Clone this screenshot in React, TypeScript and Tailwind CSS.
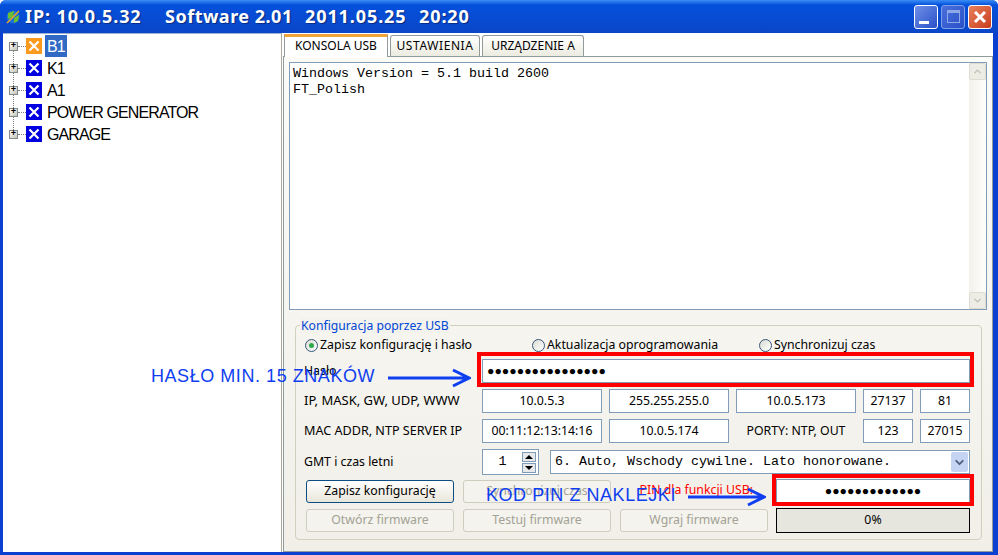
import {ChevronDown, ChevronUp} from "lucide-react";

const ui = "font-['Noto_Sans',sans-serif]";

const tree = ["B1", "K1", "A1", "POWER GENERATOR", "GARAGE"];

function TreeRow({label, index}: { label: string; index: number }) {
    const first = index === 0;
    return (
        <div className="flex items-center h-[22px] pl-[6px]">
            <div className="w-[9px] h-[9px] border border-[#7f8c8c] bg-gradient-to-br from-white to-[#c8c4b4] flex items-center justify-center relative z-10">
                <span className="text-black text-[9px] leading-[7px] font-['Liberation_Mono',monospace] font-bold">+</span>
            </div>
            <div className="w-[8px] border-t border-dotted border-[#808080]"/>
            <div className={`w-[16px] h-[16px] flex items-center justify-center ${first ? "bg-[#fb9a1c]" : "bg-[#0000e0]"}`}>
                <svg width="12" height="12" viewBox="0 0 12 12">
                    <path d="M1.5 1.5 L10.5 10.5 M10.5 1.5 L1.5 10.5" stroke="white" strokeWidth="2.2"/>
                </svg>
            </div>
            <span className={`ml-[3px] px-[2px] h-[22px] leading-[23px] text-[16px] tracking-[-0.9px] font-['Liberation_Sans',sans-serif] ${first ? "bg-[#316ac5] text-white" : "text-black"}`}>
                {label}
            </span>
        </div>
    );
}

function Tab({label, active, width}: { label: string; active?: boolean; width: string }) {
    return (
        <div className={`${width} ${active ? "h-[23px] bg-white border-t-[3px] border-t-[#f0a43a] -mb-[1px] z-10 pb-[3px]" : "h-[21px] bg-gradient-to-b from-white to-[#ecebe0] border-t border-t-[#919b9c] rounded-t-[3px]"} border-x border-[#919b9c] flex items-center justify-center text-[12px] text-black ${ui}`}>
            {label}
        </div>
    );
}

function Field({children, width}: { children: React.ReactNode; width: string }) {
    return (
        <div className={`${width} h-[24px] bg-white border border-[#7f9db9] flex items-center justify-center text-[12.3px] text-black ${ui}`}>
            {children}
        </div>
    );
}

function Btn({label, primary}: { label: string; primary?: boolean }) {
    return (
        <div className={`w-[148px] h-[23px] rounded-[3px] flex items-center justify-center text-[12.3px] ${ui} ${primary ? "border border-[#0d4d86] bg-gradient-to-b from-white to-[#e8e6da] text-black" : "border border-[#cfcdbf] bg-[#f4f3ee] text-[#a3a294]"}`}>
            {label}
        </div>
    );
}

function Radio({label, checked, className}: { label: string; checked?: boolean; className: string }) {
    return (
        <div className={`${className} flex items-center gap-[2px] text-[12.3px] text-black whitespace-nowrap ${ui}`}>
            <div className="w-[13px] h-[13px] rounded-full border border-[#35567a] bg-gradient-to-br from-[#dcdcd4] to-white flex items-center justify-center">
                {checked && <div className="w-[5px] h-[5px] rounded-full bg-[#2fa84a]"/>}
            </div>
            {label}
        </div>
    );
}

function Arrow({width}: { width: number }) {
    return (
        <svg width={width} height="20" viewBox={`0 0 ${width} 20`}>
            <path d={`M1 10 H${width - 2} M${width - 18} 2 L${width - 2} 10 L${width - 18} 18`} stroke="#0f3ff0" strokeWidth="3" fill="none"/>
        </svg>
    );
}

export default function App() {
    return (
        <div className="relative w-[998px] h-[555px] overflow-hidden flex flex-col bg-[#0a3fd0] rounded-t-[6px]">
            {/* title bar */}
            <div className="h-[33px] shrink-0 flex items-center pl-[6px] pr-[6px] bg-gradient-to-b from-[#3a8cf5] via-[#0450dc] via-[15%] to-[#0a46c8]">
                <svg width="14" height="16" viewBox="0 0 14 16" className="shrink-0">
                    <circle cx="7" cy="8" r="6.5" fill="#1f6fd8"/>
                    <path d="M2 4 L8 2 L7 8 L2 10 Z M8 9 L13 6 L12 12 L8 14 Z" fill="#68c030"/>
                    <path d="M1 14 L13 2" stroke="#f0a820" strokeWidth="1.5"/>
                </svg>
                <div className="ml-[5px] flex text-white text-[18px] font-bold tracking-[0.9px] whitespace-nowrap font-['Noto_Sans',sans-serif] [text-shadow:1px_1px_1px_#0a2a80]">
                    <span className="w-[140px]">IP: 10.0.5.32</span>
                    <span className="w-[140px] tracking-[0.5px]">Software 2.01</span>
                    <span className="w-[114px]">2011.05.25</span>
                    <span>20:20</span>
                </div>
                <div className="ml-auto flex gap-[3px]">
                    <div className="w-[24px] h-[24px] rounded-[3px] border border-white bg-gradient-to-br from-[#6f8fe8] to-[#2a50c8] flex items-end pl-[4px] pb-[4px]">
                        <div className="w-[10px] h-[3px] bg-white"/>
                    </div>
                    <div className="w-[24px] h-[24px] rounded-[3px] border border-[#7f9ee8] bg-gradient-to-br from-[#4a70dc] to-[#2a50c8] flex items-center justify-center">
                        <div className="w-[13px] h-[13px] border border-[#8fa8e8] border-t-[3px]"/>
                    </div>
                    <div className="w-[24px] h-[24px] rounded-[3px] border border-white bg-gradient-to-br from-[#e8805c] to-[#c83a18] flex items-center justify-center">
                        <svg width="14" height="14" viewBox="0 0 14 14">
                            <path d="M2 2 L12 12 M12 2 L2 12" stroke="white" strokeWidth="3"/>
                        </svg>
                    </div>
                </div>
            </div>

            {/* body */}
            <div className="flex-1 flex min-h-0 ml-[3px] mr-[5px] mb-[3px] bg-white">
                <div className="w-[279px] shrink-0 pt-[1px] border-t border-[#9db0d0] border-r border-r-[#aca899] relative">
                    <div className="absolute left-[10px] top-[14px] h-[88px] border-l border-dotted border-[#808080]"/>
                    {tree.map((t, i) => <TreeRow key={t} label={t} index={i}/>)}
                </div>

                <div className="flex-1 flex flex-col min-w-0 pl-[1px]">
                    {/* tabs */}
                    <div className="h-[22px] mt-[1px] flex items-end pl-[1px] gap-[2px] relative shrink-0">
                        <Tab label="KONSOLA USB" active width="w-[104px]"/>
                        <Tab label="USTAWIENIA" width="w-[90px] tracking-[0.6px]"/>
                        <Tab label="URZĄDZENIE A" width="w-[102px]"/>
                    </div>

                    <div className="flex-1 min-h-0 border border-[#919b9c] bg-gradient-to-b from-[#fbfbf8] to-[#f1efe8] flex flex-col pt-[5px] pl-[5px] pr-[5px]">
                        {/* console */}
                        <div className="h-[248px] shrink-0 bg-white border border-[#7f9db9] flex">
                            <div className="flex-1 pl-[3px] pt-[3px] text-[13.33px] leading-[16px] text-black font-['Liberation_Mono',monospace] whitespace-pre">
                                {"Windows Version = 5.1 build 2600\nFT_Polish"}
                            </div>
                            <div className="w-[17px] bg-gradient-to-r from-[#f3f1ec] to-[#fefefb] flex flex-col justify-between">
                                <div className="h-[17px] bg-[#eeede5] border border-[#dedcd0] rounded-[2px] flex items-center justify-center">
                                    <ChevronUp size={11} strokeWidth={3} className="text-[#c0bfb2]"/>
                                </div>
                                <div className="h-[17px] bg-[#eeede5] border border-[#dedcd0] rounded-[2px] flex items-center justify-center">
                                    <ChevronDown size={11} strokeWidth={3} className="text-[#c0bfb2]"/>
                                </div>
                            </div>
                        </div>

                        {/* config group */}
                        <div className="relative mt-[15px] ml-[6px] h-[215px] w-[687px] rounded-[4px] border border-[#d0d0bf] pl-[8px] pt-[10px]">
                            <span className={`absolute left-[4px] -top-[8px] bg-[#f3f2ec] px-[1px] text-[12.2px] leading-[15px] text-[#0046d5] ${ui}`}>
                                Konfiguracja poprzez USB
                            </span>
                            <div className="h-[18px] flex items-center ml-[1px]">
                                <Radio label="Zapisz konfigurację i hasło" checked className="w-[227px]"/>
                                <Radio label="Aktualizacja oprogramowania" className="w-[227px]"/>
                                <Radio label="Synchronizuj czas" className="w-[120px]"/>
                            </div>

                            <div className="mt-[5px] flex flex-col gap-[6px]">
                                <div className={`flex items-center h-[24px] text-[12.3px] text-black ${ui}`}>
                                    <span className="w-[178px]">Hasło</span>
                                    <Field width="w-[488px] !justify-start pl-[4px] font-bold">●●●●●●●●●●●●●●●●</Field>
                                </div>
                                <div className={`flex items-center h-[24px] gap-[7px] text-[12.3px] text-black ${ui}`}>
                                    <span className="w-[171px] text-[13px] whitespace-nowrap">IP, MASK, GW, UDP, WWW</span>
                                    <Field width="w-[120px]">10.0.5.3</Field>
                                    <Field width="w-[120px]">255.255.255.0</Field>
                                    <Field width="w-[120px]">10.0.5.173</Field>
                                    <Field width="w-[50px]">27137</Field>
                                    <Field width="w-[50px]">81</Field>
                                </div>
                                <div className={`flex items-center h-[24px] gap-[7px] text-[12.3px] text-black ${ui}`}>
                                    <span className="w-[171px] text-[12.6px] whitespace-nowrap">MAC ADDR, NTP SERVER IP</span>
                                    <Field width="w-[120px]">00:11:12:13:14:16</Field>
                                    <Field width="w-[120px]">10.0.5.174</Field>
                                    <span className="w-[120px] text-center">PORTY: NTP, OUT</span>
                                    <Field width="w-[50px]">123</Field>
                                    <Field width="w-[50px]">27015</Field>
                                </div>
                            </div>

                            <div className={`mt-[6px] flex items-center h-[26px] text-[12.3px] text-black ${ui}`}>
                                <span className="w-[178px]">GMT i czas letni</span>
                                <div className="w-[57px] h-[26px] bg-white border border-[#7f9db9] flex items-center">
                                    <span className="flex-1 text-center font-['Liberation_Mono',monospace] text-[13.33px]">1</span>
                                    <div className="w-[14px] mr-[2px] flex flex-col gap-[1px]">
                                        <div className="h-[10px] border border-[#7f9db9] bg-[#e6e8ea] flex items-center justify-center">
                                            <div className="w-0 h-0 border-x-[4px] border-x-transparent border-b-[4px] border-b-black"/>
                                        </div>
                                        <div className="h-[10px] border border-[#7f9db9] bg-[#e6e8ea] flex items-center justify-center">
                                            <div className="w-0 h-0 border-x-[4px] border-x-transparent border-t-[4px] border-t-black"/>
                                        </div>
                                    </div>
                                </div>
                                <div className="ml-[11px] w-[420px] h-[24px] bg-white border border-[#7f9db9] flex items-center justify-between pl-[4px] pr-[1px] font-['Liberation_Mono',monospace] text-[13.33px] whitespace-pre">
                                    6. Auto, Wschody cywilne. Lato honorowane.
                                    <div className="w-[17px] h-[20px] bg-[#c6d4f4] rounded-[2px] flex items-center justify-center">
                                        <ChevronDown size={13} strokeWidth={3.5} className="text-[#4d6185]"/>
                                    </div>
                                </div>
                            </div>

                            <div className="mt-[5px] flex items-center gap-[9px] h-[23px] ml-[2px]">
                                <Btn label="Zapisz konfigurację" primary/>
                                <Btn label="Synchronizuj czas"/>
                                <span className={`w-[148px] text-right pr-[15px] -mt-[3px] text-[12.3px] text-[#ff0000] whitespace-nowrap ${ui}`}>PIN dla funkcji USB:</span>
                                <Field width="w-[194px] -ml-[1px] -mt-[1px] font-bold">●●●●●●●●●●●●●</Field>
                            </div>
                            <div className="mt-[6px] flex items-center gap-[9px] h-[23px] ml-[2px]">
                                <Btn label="Otwórz firmware"/>
                                <Btn label="Testuj firmware"/>
                                <Btn label="Wgraj firmware"/>
                                <div className={`-ml-[1px] w-[194px] h-[25px] border border-black bg-[#e6e6df] flex items-center justify-center text-[12.3px] text-black ${ui}`}>
                                    0%
                                </div>
                            </div>
                        </div>
                    </div>
                </div>
            </div>

            {/* annotations over the screenshot */}
            <div className="absolute left-[477px] top-[352px] w-[497px] h-[35px] border-[4px] border-[#ff0000]"/>
            <div className="absolute left-[772px] top-[474px] w-[202px] h-[32px] border-[4px] border-[#ff0000]"/>
            <span className="absolute left-[151px] top-[365px] text-[18px] leading-[22px] tracking-[0.55px] text-[#0f3ff0] whitespace-nowrap font-['Liberation_Sans',sans-serif]">
                HASŁO MIN. 15 ZNAKÓW
            </span>
            <div className="absolute left-[387px] top-[368px]"><Arrow width={84}/></div>
            <span className="absolute left-[486px] top-[484px] text-[18px] leading-[22px] tracking-[0.55px] text-[#0f3ff0] whitespace-nowrap font-['Liberation_Sans',sans-serif]">
                KOD PIN Z NAKLEJKI
            </span>
            <div className="absolute left-[687px] top-[487px]"><Arrow width={79}/></div>
        </div>
    );
}
